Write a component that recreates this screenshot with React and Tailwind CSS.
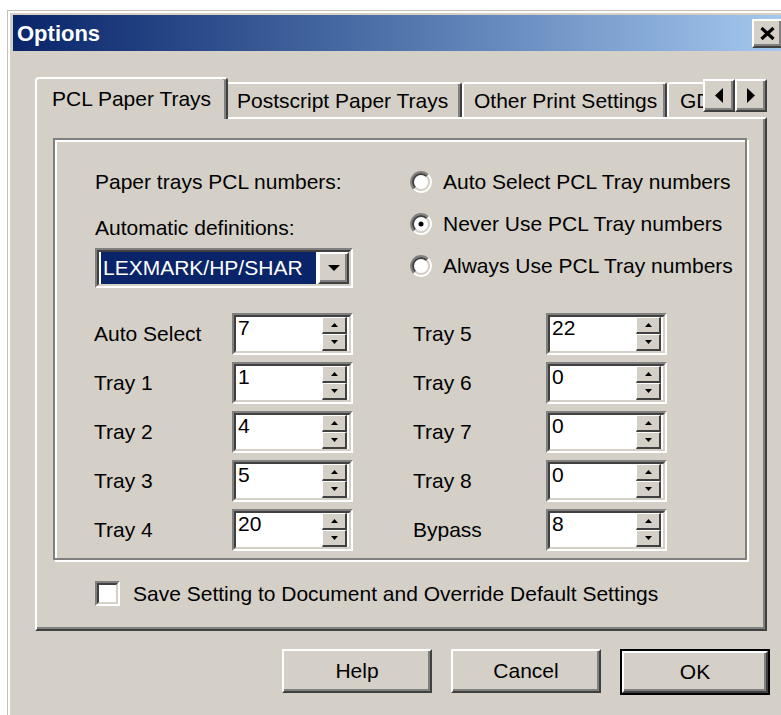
import React from 'react';

// classic 3D edges
const raised =
  'border-2 border-t-white border-l-white border-r-[#404040] border-b-[#404040] shadow-[inset_-2px_-2px_#808080]';
const sunkenOuter = 'border-2 border-t-[#808080] border-l-[#808080] border-r-white border-b-white';
const sunkenInner = 'border-2 border-t-[#404040] border-l-[#404040] border-r-[#d4d0c8] border-b-[#d4d0c8]';

const leftTrays = [
  ['Auto Select', '7'],
  ['Tray 1', '1'],
  ['Tray 2', '4'],
  ['Tray 3', '5'],
  ['Tray 4', '20'],
];

const rightTrays = [
  ['Tray 5', '22'],
  ['Tray 6', '0'],
  ['Tray 7', '0'],
  ['Tray 8', '0'],
  ['Bypass', '8'],
];

const trayModes = [
  { label: 'Auto Select PCL Tray numbers', checked: false },
  { label: 'Never Use PCL Tray numbers', checked: true },
  { label: 'Always Use PCL Tray numbers', checked: false },
];

const SpinButton = ({ up }) => (
  <div className="h-[17px] flex items-center justify-center bg-[#d4d0c8] border-t border-l border-white border-r-2 border-b-2 border-r-[#404040] border-b-[#404040]">
    <svg width="7" height="4" viewBox="0 0 7 4">
      <path d={up ? 'M0 4 L3.5 0 L7 4 Z' : 'M0 0 L7 0 L3.5 4 Z'} fill="#000" />
    </svg>
  </div>
);

const SpinBox = ({ value }) => (
  <div className={`w-[121px] h-[42px] ${sunkenOuter}`}>
    <div className={`h-full flex bg-white ${sunkenInner}`}>
      <div className="flex-1 pl-[2px] leading-[24px] -mt-[1px]">{value}</div>
      <div className="w-[25px] mr-[2px] flex flex-col">
        <SpinButton up />
        <SpinButton />
      </div>
    </div>
  </div>
);

const TrayColumn = ({ rows, labelWidth }) => (
  <div className="flex flex-col gap-[7px]">
    {rows.map(([label, value]) => (
      <div key={label} className="flex items-center">
        <div className={labelWidth}>{label}</div>
        <SpinBox value={value} />
      </div>
    ))}
  </div>
);

const Radio = ({ checked }) => (
  <svg width="22" height="22" viewBox="0 0 22 22">
    <circle cx="11" cy="11" r="8" fill="#fff" />
    <path d="M3.93 18.07 A10 10 0 0 1 18.07 3.93" stroke="#808080" strokeWidth="2" fill="none" />
    <path d="M18.07 3.93 A10 10 0 0 1 3.93 18.07" stroke="#fff" strokeWidth="2" fill="none" />
    <path d="M5.34 16.66 A8 8 0 0 1 16.66 5.34" stroke="#404040" strokeWidth="2" fill="none" />
    <path d="M16.66 5.34 A8 8 0 0 1 5.34 16.66" stroke="#d4d0c8" strokeWidth="2" fill="none" />
    {checked && <circle cx="11" cy="11" r="2.5" fill="#000" />}
  </svg>
);

const Combo = () => (
  <div className={`w-[258px] h-[40px] ${sunkenOuter}`}>
    <div className={`h-full flex bg-white ${sunkenInner}`}>
      <div className="ml-[2px] w-[215px] bg-[#0a246a] text-white leading-[32px] pl-[2px] overflow-hidden whitespace-nowrap">
        LEXMARK/HP/SHAR
      </div>
      <div className={`ml-auto w-[31px] h-full bg-[#d4d0c8] flex items-center justify-center ${raised}`}>
        <svg width="12" height="6" viewBox="0 0 12 6">
          <path d="M0 0 L12 0 L6 6 Z" fill="#000" />
        </svg>
      </div>
    </div>
  </div>
);

const DialogButton = ({ children, isDefault }) =>
  isDefault ? (
    <div className="w-[150px] h-[46px] border-2 border-black">
      <div className={`h-full flex items-center justify-center bg-[#d4d0c8] ${raised}`}>{children}</div>
    </div>
  ) : (
    <div className={`w-[150px] h-[44px] flex items-center justify-center bg-[#d4d0c8] ${raised}`}>{children}</div>
  );

export default function App() {
  return (
    <div className="w-[781px] h-[715px] overflow-hidden bg-white font-['Liberation_Sans',Arial,sans-serif] text-[21px] text-black">
      <div className="ml-[7px] mt-[10px] w-[790px] h-[760px] border-l border-t border-[#c4c1b9] bg-[#d4d0c8]">
        <div className="h-full border-l-2 border-t-2 border-white pl-[3px] pt-[2px]">
          {/* title bar */}
          <div className="w-[774px] h-[36px] flex items-center bg-linear-to-r from-[#0a246a] to-[#a6caf0] pl-[4px] pr-[4px]">
            <span className="text-white font-bold text-[22px]">Options</span>
            <div className={`ml-auto w-[31px] h-[29px] bg-[#d4d0c8] flex items-center justify-center ${raised}`}>
              <svg width="15" height="13" viewBox="0 0 15 13">
                <path d="M1.5 1 L13.5 12 M13.5 1 L1.5 12" stroke="#000" strokeWidth="3.2" />
              </svg>
            </div>
          </div>

          <div className="ml-[22px] mt-[26px] w-[732px]">
            {/* tabs, the scroll arrows sit over the last one */}
            <div className="relative z-10 h-[40px] flex items-end">
              <div className="h-[42px] -mb-[2px] w-[193px] shrink-0 bg-[#d4d0c8] border-l-2 border-t-2 border-white border-r-2 border-r-[#404040] rounded-t-[4px] shadow-[inset_-2px_0_#808080] flex items-center pl-[15px] whitespace-nowrap">
                PCL Paper Trays
              </div>
              <div className="h-[35px] w-[234px] shrink-0 border-t-2 border-white border-r-2 border-r-[#404040] rounded-tr-[3px] shadow-[inset_-2px_0_#808080] flex items-center pl-[9px] whitespace-nowrap">
                Postscript Paper Trays
              </div>
              <div className="h-[35px] w-[205px] shrink-0 border-l-2 border-t-2 border-white border-r-2 border-r-[#404040] rounded-t-[3px] shadow-[inset_-2px_0_#808080] flex items-center pl-[10px] whitespace-nowrap">
                Other Print Settings
              </div>
              <div className="h-[35px] w-[60px] shrink-0 border-l-2 border-t-2 border-white rounded-tl-[3px] flex items-center pl-[11px] whitespace-nowrap">
                GD
              </div>
              <div className="absolute right-0 top-[2px] flex">
                <div className={`w-[32px] h-[33px] bg-[#d4d0c8] flex items-center justify-center ${raised}`}>
                  <svg width="8" height="15" viewBox="0 0 8 15">
                    <path d="M8 0 L8 15 L0 7.5 Z" fill="#000" />
                  </svg>
                </div>
                <div className={`w-[32px] h-[33px] bg-[#d4d0c8] flex items-center justify-center ${raised}`}>
                  <svg width="8" height="15" viewBox="0 0 8 15">
                    <path d="M0 0 L0 15 L8 7.5 Z" fill="#000" />
                  </svg>
                </div>
              </div>
            </div>

            {/* tab page */}
            <div className="w-[732px] h-[514px] border-2 border-t-white border-l-white border-r-[#404040] border-b-[#404040] shadow-[inset_-2px_-2px_#808080] pt-[19px] pl-[16px]">
              <div className="w-[694px] h-[422px] border-2 border-[#808080] shadow-[inset_2px_2px_#fff,2px_2px_#fff]">
                <div className="flex">
                  <div className="ml-[40px] w-[315px] pt-[28px]">
                    <div className="h-[28px] leading-[28px] whitespace-nowrap">Paper trays PCL numbers:</div>
                    <div className="mt-[18px] h-[28px] leading-[28px] whitespace-nowrap">Automatic definitions:</div>
                    <div className="mt-[6px]">
                      <Combo />
                    </div>
                  </div>
                  <div className="pt-[21px]">
                    {trayModes.map((m) => (
                      <div key={m.label} className="h-[42px] flex items-center gap-[11px] whitespace-nowrap">
                        <Radio checked={m.checked} />
                        <span>{m.label}</span>
                      </div>
                    ))}
                  </div>
                </div>

                <div className="mt-[25px] ml-[39px] flex gap-[60px]">
                  <TrayColumn rows={leftTrays} labelWidth="w-[138px]" />
                  <TrayColumn rows={rightTrays} labelWidth="w-[133px]" />
                </div>
              </div>

              <div className="mt-[18px] ml-[42px] flex items-center gap-[13px]">
                <div className={`w-[25px] h-[25px] ${sunkenOuter}`}>
                  <div className={`h-full bg-white ${sunkenInner}`} />
                </div>
                <span className="whitespace-nowrap">Save Setting to Document and Override Default Settings</span>
              </div>
            </div>
          </div>

          {/* dialog buttons */}
          <div className="mt-[18px] ml-[269px] flex items-start gap-[19px]">
            <DialogButton>Help</DialogButton>
            <DialogButton>Cancel</DialogButton>
            <DialogButton isDefault>OK</DialogButton>
          </div>
        </div>
      </div>
    </div>
  );
}
